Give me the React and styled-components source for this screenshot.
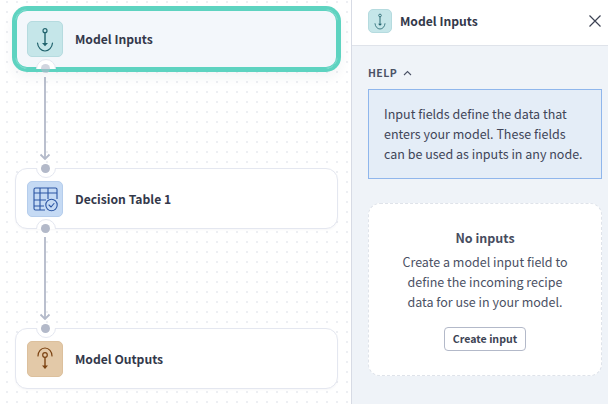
import React from "react";
import styled, { createGlobalStyle } from "styled-components";

const GlobalStyle = createGlobalStyle`
  html, body {
    margin: 0;
    padding: 0;
    height: 100%;
    overflow: hidden;
  }
  body {
    font-family: "Noto Sans CJK SC", "Noto Sans", sans-serif;
    color: #33384a;
  }
`;

const Page = styled.div`
  display: flex;
  width: 608px;
  height: 404px;
`;

const Canvas = styled.div`
  flex: 1;
  box-sizing: border-box;
  padding: 9px 13px 0 15px;
  background-color: #fff;
  background-image: radial-gradient(circle, #edeff3 1px, transparent 1.2px);
  background-size: 10px 10px;
  background-position: 2px -3px;
`;

const NodeCard = styled.div`
  position: relative;
  display: flex;
  align-items: center;
  gap: 12px;
  box-sizing: border-box;
  height: ${(p) => (p.$selected ? 60 : 61)}px;
  padding: 0 11px;
  border: 1px solid ${(p) => (p.$selected ? "#5dd3c0" : "#e4e7f0")};
  border-radius: 12px;
  background: ${(p) => (p.$selected ? "#f3f7fb" : "#fff")};
  box-shadow: ${(p) =>
    p.$selected
      ? "0 0 0 3px #5dd3c0, inset 0 0 0 1px #5dd3c0, 0 6px 12px 3px rgba(40, 50, 80, 0.05)"
      : "0 1px 2px rgba(40, 50, 80, 0.04)"};
`;

const IconTile = styled.div`
  display: flex;
  align-items: center;
  justify-content: center;
  flex: none;
  width: ${(p) => p.$size || 36}px;
  height: ${(p) => p.$size || 36}px;
  border-radius: 5px;
  background: ${(p) => p.$bg};
  border: 1px solid ${(p) => p.$line};
  box-sizing: border-box;
  color: ${(p) => p.$ink};
`;

const NodeLabel = styled.span`
  font-size: 12.15px;
  line-height: 20px;
  font-weight: 600;
  color: #33384a;
`;

const Notch = styled.span`
  position: absolute;
  left: 20px;
  ${(p) => (p.$side === "top" ? "top: -11px;" : "bottom: -11px;")}
  width: 18px;
  height: 18px;
  border: 1px solid #e4e7f0;
  border-radius: 50%;
  background: #fff;
  clip-path: ${(p) =>
    p.$side === "top" ? "inset(10px -1px -1px -1px)" : "inset(-1px -1px 10px -1px)"};
`;

const Handle = styled.span`
  position: absolute;
  left: 25px;
  ${(p) => (p.$side === "top" ? "top: -5px;" : "bottom: -5px;")}
  width: 9px;
  height: 9px;
  border-radius: 50%;
  background: #b3b9c9;
  opacity: ${(p) => (p.$faded ? 0.6 : 1)};
`;

const EdgeWrap = styled.div`
  display: flex;
  box-sizing: border-box;
  height: 99px;
  padding: 8px 0 0 24px;
`;

const Panel = styled.aside`
  display: flex;
  flex-direction: column;
  flex: none;
  box-sizing: border-box;
  width: 257px;
  border-left: 1px solid #d7dbe5;
  background: #eff3f8;
`;

const PanelHeader = styled.header`
  display: flex;
  align-items: center;
  gap: 8px;
  box-sizing: border-box;
  height: 46px;
  padding: 0 5px 3px 16px;
  background: #fff;
  border-bottom: 1px solid #dfe3ea;
`;

const PanelTitle = styled.h1`
  flex: 1;
  margin: 0;
  font-size: 12.15px;
  line-height: 20px;
  font-weight: 600;
  color: #33384a;
`;

const CloseButton = styled.button`
  display: flex;
  padding: 0;
  border: 0;
  background: none;
  color: #3d4354;
`;

const PanelBody = styled.div`
  display: flex;
  flex-direction: column;
  padding: 19px 6px 0 16px;
`;

const HelpToggle = styled.div`
  display: flex;
  align-items: center;
  gap: 6px;
  height: 16px;
  margin-bottom: 8px;
  font-size: 10.5px;
  line-height: 16px;
  font-weight: 700;
  letter-spacing: 0.4px;
  color: #4b5266;
`;

const HelpBox = styled.div`
  box-sizing: border-box;
  height: 90px;
  padding: 14px 16px 0 15px;
  border: 1px solid #8fb6ec;
  background: #e4edf7;
  font-size: 12.5px;
  line-height: 20px;
  color: #3f4557;
`;

const EmptyCard = styled.div`
  display: flex;
  flex-direction: column;
  align-items: center;
  box-sizing: border-box;
  height: 173px;
  margin-top: 24px;
  padding-top: 25px;
  border: 1px dashed #dfe3ea;
  border-radius: 12px;
  background: #fff;
  text-align: center;
`;

const EmptyTitle = styled.h2`
  margin: 0 0 5px;
  font-size: 12.5px;
  line-height: 18px;
  font-weight: 600;
  color: #474d60;
`;

const EmptyText = styled.p`
  margin: 0 0 15px;
  font-size: 12.5px;
  line-height: 20px;
  color: #4b5164;
`;

const OutlineButton = styled.button`
  box-sizing: border-box;
  width: 82px;
  height: 24px;
  padding: 0;
  border: 1px solid #b3b9c9;
  border-radius: 4px;
  background: #fff;
  font-family: inherit;
  font-size: 10.6px;
  line-height: 16px;
  font-weight: 600;
  color: #3d4354;
`;

const AnchorIcon = ({ size = 30 }) => (
  <svg width={size} height={size} viewBox="0 0 30 30" fill="none" stroke="currentColor" strokeWidth="1.2">
    <circle cx="15" cy="6.7" r="2" />
    <path d="M15 8.700V21" strokeWidth="1.400" />
    <path d="M12 19h6l-3 3.200z" fill="currentColor" stroke="none" />
    <path d="M7.500 19c.4 4.500 3.600 8 7.500 8s7.100-3.500 7.500-8" strokeLinecap="round" />
  </svg>
);

const TableIcon = () => (
  <svg width="26" height="26" viewBox="0 0 26 26" fill="none" stroke="currentColor" strokeWidth="1.100">
    <path d="M13 24H3.500A1.500 1.500 0 0 1 2 22.500V3.500A1.500 1.500 0 0 1 3.500 2h20A1.500 1.500 0 0 1 25 3.500V13" />
    <path d="M2 7h23M2 14h12M2 20h10M8 2v22M16 2v11" />
    <circle cx="19.500" cy="19" r="5.700" fill="#c5daf4" />
    <path d="M17 19l2 2 3-3.500" strokeLinecap="round" />
  </svg>
);

const OutputIcon = () => (
  <svg width="30" height="30" viewBox="0 0 30 30" fill="none" stroke="currentColor" strokeWidth="1.200">
    <path d="M8 12c0-4.500 3-8 7-8s7 3.500 7 8" strokeLinecap="round" />
    <circle cx="15" cy="11" r="2.300" />
    <path d="M15 13.300V24" strokeWidth="1.400" />
    <path d="M12 21.500h6L15 25z" fill="currentColor" stroke="none" />
  </svg>
);

const Edge = () => (
  <svg width="12" height="83" viewBox="0 0 12 83" fill="none" stroke="#b3b9c9" strokeWidth="1.800">
    <path d="M6 0V82" />
    <path d="M1.500 77.500L6 82l4.500-4.500" />
  </svg>
);

const Connector = () => (
  <EdgeWrap>
    <Edge />
  </EdgeWrap>
);

const tiles = {
  input: { $bg: "#c5e6e9", $line: "#b5dbdf", $ink: "#21636d" },
  table: { $bg: "#c5daf4", $line: "#b5cdec", $ink: "#2b55a3" },
  output: { $bg: "#e3c9a8", $line: "#dcc09d", $ink: "#7c4312" },
};

export default function App() {
  return (
    <Page>
      <GlobalStyle />
      <Canvas>
        <NodeCard $selected>
          <IconTile {...tiles.input}>
            <AnchorIcon />
          </IconTile>
          <NodeLabel>Model Inputs</NodeLabel>
          <Notch $side="bottom" />
          <Handle $side="bottom" $faded />
        </NodeCard>
        <Connector />
        <NodeCard>
          <Notch $side="top" />
          <Handle $side="top" />
          <IconTile {...tiles.table}>
            <TableIcon />
          </IconTile>
          <NodeLabel>Decision Table 1</NodeLabel>
          <Notch $side="bottom" />
          <Handle $side="bottom" />
        </NodeCard>
        <Connector />
        <NodeCard>
          <Notch $side="top" />
          <Handle $side="top" />
          <IconTile {...tiles.output}>
            <OutputIcon />
          </IconTile>
          <NodeLabel>Model Outputs</NodeLabel>
        </NodeCard>
      </Canvas>
      <Panel>
        <PanelHeader>
          <IconTile $size={24} {...tiles.input}>
            <AnchorIcon size={20} />
          </IconTile>
          <PanelTitle>Model Inputs</PanelTitle>
          <CloseButton aria-label="Close">
            <svg width="16" height="16" viewBox="0 0 16 16" fill="none" stroke="currentColor" strokeWidth="1.200">
              <path d="M2.500 2.500l11 11M13.500 2.500l-11 11" />
            </svg>
          </CloseButton>
        </PanelHeader>
        <PanelBody>
          <HelpToggle>
            HELP
            <svg width="9" height="6" viewBox="0 0 9 6" fill="none" stroke="currentColor" strokeWidth="1.100">
              <path d="M1 5l3.500-3.500L8 5" />
            </svg>
          </HelpToggle>
          <HelpBox>
            Input fields define the data that enters your model. These fields can be used as inputs in any node.
          </HelpBox>
          <EmptyCard>
            <EmptyTitle>No inputs</EmptyTitle>
            <EmptyText>
              Create a model input field to
              <br />
              define the incoming recipe
              <br />
              data for use in your model.
            </EmptyText>
            <OutlineButton>Create input</OutlineButton>
          </EmptyCard>
        </PanelBody>
      </Panel>
    </Page>
  );
}
